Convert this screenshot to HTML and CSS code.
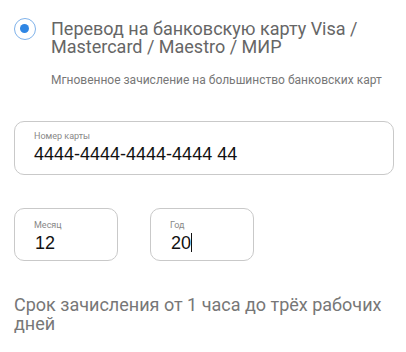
FILE: index.html
```html
<!DOCTYPE html>
<html lang="ru">
<head>
<meta charset="utf-8">
<link rel="stylesheet" href="styles.css">
</head>
<body>
<div class="page">
  <div class="option">
    <span class="radio"><span class="dot"></span></span>
    <div class="option-text">
      <div class="title">Перевод на банковскую карту Visa / Mastercard / Maestro / МИР</div>
      <div class="subtitle">Мгновенное зачисление на большинство банковских карт</div>
    </div>
  </div>
  <div class="field field-card">
    <div class="label">Номер карты</div>
    <div class="value">4444-4444-4444-4444 44</div>
  </div>
  <div class="row">
    <div class="field field-small">
      <div class="label">Месяц</div>
      <div class="value">12</div>
    </div>
    <div class="field field-small">
      <div class="label">Год</div>
      <div class="value">20<span class="caret"></span></div>
    </div>
  </div>
  <div class="note">Срок зачисления от 1 часа до трёх рабочих дней</div>
</div>
</body>
</html>
```
FILE: styles.css
```css
html, body { margin: 0; padding: 0; background: #fff; }
body { font-family: Roboto, "Liberation Sans", sans-serif; }
.page { padding: 17px 12px 0 14px; }
.option { display: flex; align-items: flex-start; }
.radio {
  width: 20px; height: 20px; border: 1.5px solid #7fb2ea; border-radius: 50%;
  display: flex; align-items: center; justify-content: center; flex: none;
  margin-top: 1px;
}
.dot { width: 9px; height: 9px; border-radius: 50%; background: #2f86e4; margin: -1px 0 0 -1px; }
.option-text { margin-left: 15px; padding-top: 3px; }
.title { font-size: 18px; line-height: 18px; color: #666; }
.subtitle { font-size: 12px; line-height: 14px; color: #777; margin-top: 17px; }
.field {
  border: 1px solid #c9c9c9; border-radius: 10px; box-sizing: border-box;
  padding: 9px 19px 0; background: #fff;
}
.field-card { margin-top: 34px; height: 54px; }
.label { font-size: 9px; color: #888; line-height: 11px; }
.value { font-family: "Liberation Sans", Arial, sans-serif; font-size: 18px; color: #111; line-height: 22px; margin-top: 1px; }
.row { display: flex; gap: 32px; margin-top: 33px; }
.field-small { width: 104px; height: 53px; padding-top: 11px; }
.field-small .value { padding-left: 1px; }
.caret { display: inline-block; width: 1px; height: 19px; background: #111; vertical-align: -3px; }
.note { font-size: 18px; line-height: 19px; color: #777; margin-top: 34px; }
```
